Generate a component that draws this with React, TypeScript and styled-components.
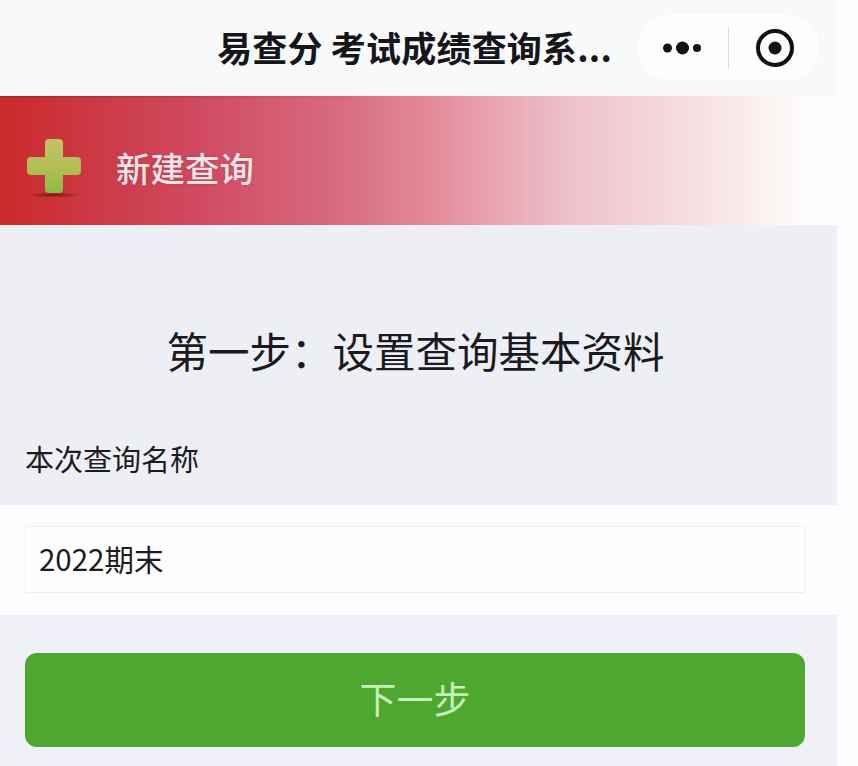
import React from "react"
import styled, { createGlobalStyle } from "styled-components"

const CJK = `"Noto Sans CJK SC", "Noto Sans", sans-serif`

const GlobalStyle = createGlobalStyle`
  html, body {
    margin: 0;
    padding: 0;
    background: #fcfdfe;
    font-family: ${CJK};
  }
`

const PlusIcon = () => (
  <svg width="58" height="60" viewBox="0 0 58 60">
    <defs>
      <linearGradient id="plusFill" x1="0" y1="0" x2="0" y2="1">
        <stop offset="0" stopColor="#c2c468" />
        <stop offset="0.5" stopColor="#b5bd55" />
        <stop offset="1" stopColor="#8fbb44" />
      </linearGradient>
      <radialGradient id="plusShadow">
        <stop offset="0" stopColor="#6e1210" stopOpacity="0.9" />
        <stop offset="1" stopColor="#6e1210" stopOpacity="0" />
      </radialGradient>
    </defs>
    <ellipse cx="28" cy="56" rx="29" ry="2.5" fill="url(#plusShadow)" />
    <path
      d="M19 4 a4 4 0 0 1 4-4 h10 a4 4 0 0 1 4 4 v14 h14 a4 4 0 0 1 4 4 v10 a4 4 0 0 1-4 4 h-14 v14 a4 4 0 0 1-4 4 h-10 a4 4 0 0 1-4-4 v-14 h-14 a4 4 0 0 1-4-4 v-10 a4 4 0 0 1 4-4 h14 z"
      fill="url(#plusFill)"
    />
  </svg>
)

const MoreIcon = () => (
  <svg width="44" height="16" viewBox="0 0 44 16">
    <circle cx="6.5" cy="8" r="4.5" fill="#111" />
    <circle cx="21.5" cy="8" r="6.5" fill="#111" />
    <circle cx="36" cy="8" r="4" fill="#111" />
  </svg>
)

const CloseIcon = () => (
  <svg width="40" height="40" viewBox="0 0 40 40">
    <circle cx="20" cy="20" r="17" fill="none" stroke="#111" strokeWidth="4" />
    <circle cx="20" cy="20" r="6.5" fill="#111" />
  </svg>
)

export default function App() {
  return (
    <>
      <GlobalStyle />
      <S.Page>
        <S.NavBar>
          <S.NavTitle>易查分 考试成绩查询系...</S.NavTitle>
          <S.Capsule>
            <S.CapsuleSlot>
              <MoreIcon />
            </S.CapsuleSlot>
            <S.CapsuleDivider />
            <S.CapsuleSlot>
              <CloseIcon />
            </S.CapsuleSlot>
          </S.Capsule>
        </S.NavBar>

        <S.Banner>
          <PlusIcon />
          <S.BannerText>新建查询</S.BannerText>
        </S.Banner>

        <S.GreyPanel>
          <S.StepTitle>第一步：设置查询基本资料</S.StepTitle>
          <S.FieldLabel>本次查询名称</S.FieldLabel>
        </S.GreyPanel>

        <S.InputRow>
          <S.NameInput readOnly value="2022期末" />
        </S.InputRow>

        <S.ButtonPanel>
          <S.NextButton>下一步</S.NextButton>
        </S.ButtonPanel>
      </S.Page>
    </>
  )
}

const S = {
  Page: styled.div`
    width: 858px;
    height: 766px;
    padding-right: 21px;
    box-sizing: border-box;
    display: flex;
    flex-direction: column;
    overflow: hidden;
    background: #fcfdfe;
  `,
  NavBar: styled.div`
    height: 96px;
    flex: none;
    display: flex;
    align-items: center;
    justify-content: flex-end;
    gap: 24px;
    padding-right: 16px;
    background: #f8f9fb;
  `,
  NavTitle: styled.div`
    font-size: 35px;
    font-weight: 700;
    letter-spacing: 0.2px;
    color: #15151a;
    white-space: nowrap;
    line-height: 1;
    margin-top: -3px;
  `,
  Capsule: styled.div`
    width: 185px;
    height: 69px;
    flex: none;
    margin-top: -1px;
    display: flex;
    align-items: center;
    border-radius: 35px;
    background: #fcfdfe;
    border: 1px solid #f5f6f8;
    box-sizing: border-box;
  `,
  CapsuleSlot: styled.div`
    flex: 1;
    display: flex;
    align-items: center;
    justify-content: center;
  `,
  CapsuleDivider: styled.div`
    width: 1px;
    height: 40px;
    background: #dcdde0;
  `,
  Banner: styled.div`
    height: 129px;
    flex: none;
    box-sizing: border-box;
    display: flex;
    align-items: center;
    gap: 32px;
    padding: 16px 0 0 26px;
    margin-right: -21px;
    background:
      linear-gradient(90deg, rgba(90, 30, 30, 0.3), rgba(90, 30, 30, 0) 45%) 0 0 / 100% 2px no-repeat,
      linear-gradient(
        90deg,
        #c92a2b 0%,
        #d04a60 23%,
        #d76a7e 39%,
        #e28a9a 50%,
        #eec0ca 66%,
        #f5dde0 80%,
        #fbefee 88%,
        #fdfdfe 94%
      );
  `,
  BannerText: styled.div`
    font-size: 34.5px;
    font-weight: 500;
    color: #f6e4e8;
    line-height: 1;
    margin-top: -2px;
    text-shadow: 0 0 2px rgba(150, 40, 60, 0.5);
  `,
  GreyPanel: styled.div`
    height: 280px;
    flex: none;
    box-sizing: border-box;
    display: flex;
    flex-direction: column;
    padding: 99px 25px 0;
    background: #eeeff5;
  `,
  StepTitle: styled.div`
    font-size: 41.5px;
    line-height: 52px;
    color: #1a1a20;
    text-align: center;
    margin-left: -6px;
  `,
  FieldLabel: styled.div`
    font-size: 29px;
    line-height: 40px;
    color: #1c1c22;
    margin-top: 62px;
  `,
  InputRow: styled.div`
    height: 110px;
    flex: none;
    box-sizing: border-box;
    padding: 21px 32px 22px 25px;
    background: #fcfdfe;
  `,
  NameInput: styled.input`
    width: 100%;
    height: 100%;
    box-sizing: border-box;
    padding: 0 13px 4px;
    border: 1px solid #eeeff3;
    border-radius: 2px;
    background: #fefeff;
    font-family: ${CJK};
    font-size: 29.5px;
    color: #1c1c24;
    outline: none;
  `,
  ButtonPanel: styled.div`
    flex: 1;
    box-sizing: border-box;
    padding: 38px 32px 19px 25px;
    background: #eef0f5;
  `,
  NextButton: styled.button`
    width: 100%;
    height: 94px;
    display: block;
    border: none;
    border-radius: 12px;
    background: #4ea72f;
    font-family: ${CJK};
    font-size: 37px;
    line-height: 1;
    color: #c6f0b8;
    padding: 0 0 3px;
  `,
}
